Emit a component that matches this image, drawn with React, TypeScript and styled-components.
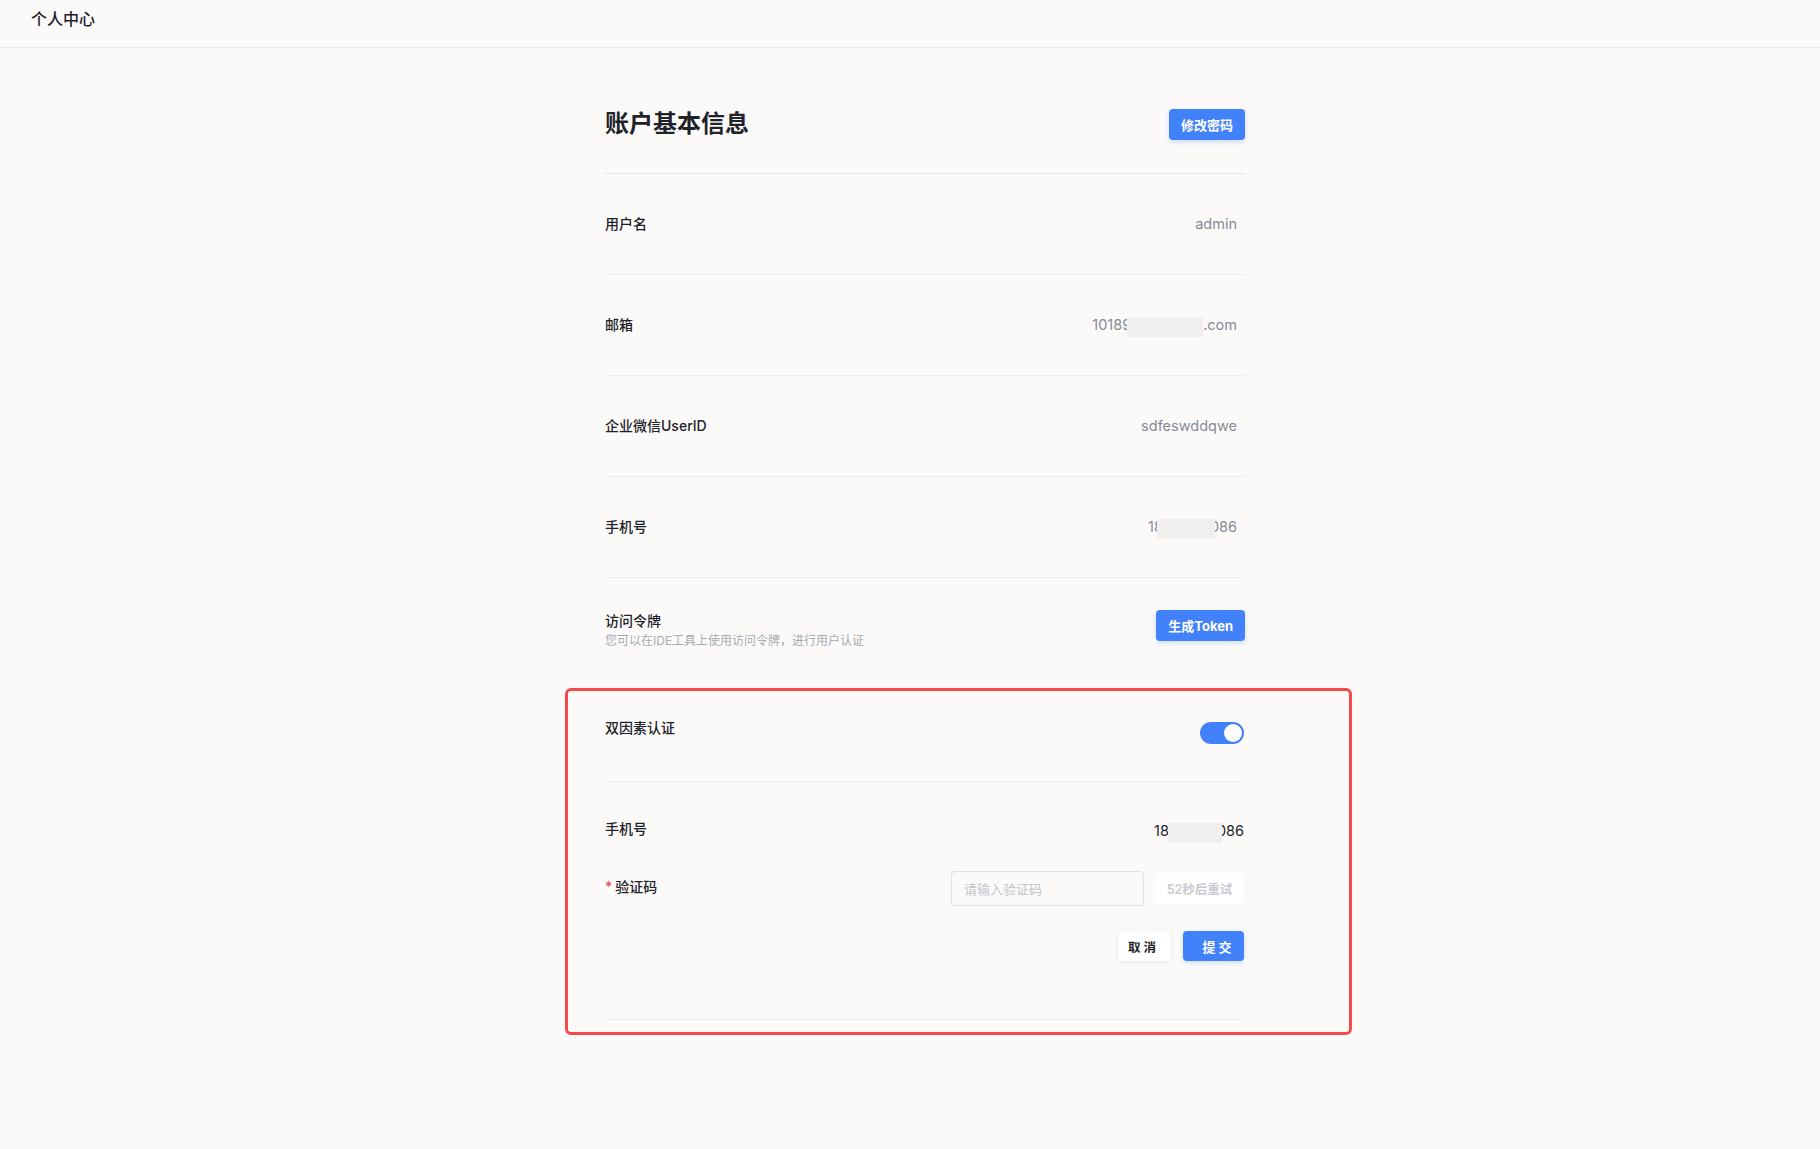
import React from "react";
import styled, { createGlobalStyle } from "styled-components";

const Global = createGlobalStyle`
  html, body { margin: 0; padding: 0; background: #fbfaf9; }
  body {
    font-family: Inter, "Noto Sans CJK SC", "Noto Sans", sans-serif;
    color: #1f2329;
    -webkit-font-smoothing: antialiased;
  }
  * { box-sizing: border-box; }
`;

const Page = styled.div`
  min-height: 1149px;
  background: #fbfaf9;
`;

const Header = styled.header`
  height: 48px;
  padding: 9px 31px 0;
  border-bottom: 1px solid #e6e6e6;
  font-size: 16px;
  line-height: 20px;
  font-weight: 500;
  color: #1f2329;
`;

const Main = styled.main`
  padding-left: 605px;
`;

const Content = styled.div`
  width: 640px;
`;

const TitleRow = styled.div`
  display: flex;
  align-items: center;
  justify-content: space-between;
  padding: 60px 0 33px;
  border-bottom: 1px solid #e6e6e6;
`;

const Title = styled.h1`
  margin: 0;
  font-size: 24px;
  line-height: 32px;
  font-weight: 600;
  color: #1f2329;
`;

const PrimaryButton = styled.button`
  height: 31px;
  padding: 0 12px;
  border: none;
  border-radius: 4px;
  background: #4182fb;
  color: #fff;
  font-family: inherit;
  font-size: 13px;
  font-weight: 700;
  box-shadow: 0 2px 5px rgba(65, 130, 251, 0.25);
`;

const InfoRow = styled.div`
  display: flex;
  align-items: center;
  justify-content: space-between;
  height: 101px;
  border-bottom: 1px solid #eeeeee;
  padding-right: 8px;
`;

const Label = styled.div`
  font-size: 14px;
  line-height: 20px;
  font-weight: 500;
  color: #1f2329;
`;

const FormLabel = styled(Label)`
  margin-top: 6px;
`;

const Value = styled.div<{ $dark?: boolean }>`
  display: flex;
  align-items: center;
  font-size: 14.5px;
  line-height: 20px;
  color: ${(p) => (p.$dark ? "#1f2329" : "#878b96")};
`;

const Redact = styled.span<{ $w: number; $l?: number; $r?: number }>`
  position: relative;
  z-index: 1;
  display: inline-block;
  width: ${(p) => p.$w}px;
  height: 20px;
  margin-left: ${(p) => p.$l ?? 0}px;
  margin-right: ${(p) => p.$r ?? 0}px;
  margin-top: 4px;
  background: #f0efee;
`;

const TokenRow = styled.div`
  display: flex;
  align-items: flex-start;
  justify-content: space-between;
  padding: 33px 0 39px;
`;

const TokenText = styled.div`
  display: flex;
  flex-direction: column;
  gap: 2px;
`;

const Hint = styled.div`
  font-size: 12px;
  line-height: 16px;
  color: #a8abb2;
`;

const TokenButton = styled(PrimaryButton)`
  margin-top: -1px;
`;

const Highlight = styled.section`
  margin: 0 -107px 0 -40px;
  padding: 0 105px 12px 37px;
  border: 3px solid #f24b4b;
  border-radius: 6px;
`;

const TwoFactorRow = styled.div`
  display: flex;
  align-items: flex-start;
  justify-content: space-between;
  padding: 27px 0 37px;
  border-bottom: 1px solid #eeeeee;
`;

const Switch = styled.div`
  width: 44px;
  height: 22px;
  margin-top: 4px;
  border-radius: 11px;
  background: #4182fb;
  display: flex;
  align-items: center;
  justify-content: flex-end;
  padding-right: 2px;
`;

const Knob = styled.div`
  width: 18px;
  height: 18px;
  border-radius: 50%;
  background: #fff;
`;

const Form = styled.div`
  display: flex;
  flex-direction: column;
  padding: 37px 0 58px;
  border-bottom: 1px solid #eeeeee;
`;

const FormRow = styled.div<{ $gap: number }>`
  display: flex;
  align-items: flex-start;
  justify-content: space-between;
  margin-bottom: ${(p) => p.$gap}px;
`;

const Required = styled.span`
  color: #f5484f;
  margin-right: 3px;
`;

const CodeGroup = styled.div`
  display: flex;
  align-items: center;
  gap: 11px;
`;

const Input = styled.input`
  width: 193px;
  height: 35px;
  border: 1px solid #dfe0e2;
  border-radius: 4px;
  background: transparent;
  padding: 0 12px;
  font-family: inherit;
  font-size: 13px;
  outline: none;
  &::placeholder { color: #c2c5cc; }
`;

const RetryButton = styled.button`
  width: 89px;
  height: 31px;
  border: none;
  border-radius: 4px;
  background: #ffffff;
  color: #c6c9d0;
  font-family: inherit;
  font-size: 12.5px;
  font-weight: 600;
`;

const Actions = styled.div`
  display: flex;
  justify-content: flex-end;
  gap: 12px;
`;

const GhostButton = styled.button`
  width: 53px;
  height: 30px;
  border: none;
  border-radius: 4px;
  background: #fff;
  color: #1f2329;
  font-family: inherit;
  font-size: 12.5px;
  font-weight: 700;
  letter-spacing: 3px;
  padding-left: 4px;
  box-shadow: 0 1px 4px rgba(0, 0, 0, 0.08);
`;

const SubmitButton = styled(PrimaryButton)`
  width: 61px;
  height: 30px;
  padding: 0 0 0 10px;
  letter-spacing: 3px;
`;

export default function App() {
  return (
    <Page>
      <Global />
      <Header>个人中心</Header>
      <Main>
        <Content>
          <TitleRow>
            <Title>账户基本信息</Title>
            <PrimaryButton>修改密码</PrimaryButton>
          </TitleRow>
          <InfoRow>
            <Label>用户名</Label>
            <Value>admin</Value>
          </InfoRow>
          <InfoRow>
            <Label>邮箱</Label>
            <Value>
              10189
              <Redact $w={76} $l={-4} />
              .com
            </Value>
          </InfoRow>
          <InfoRow>
            <Label>企业微信UserID</Label>
            <Value>sdfeswddqwe</Value>
          </InfoRow>
          <InfoRow>
            <Label>手机号</Label>
            <Value>
              18
              <Redact $w={58} $l={-6} $r={-5} />
              086
            </Value>
          </InfoRow>
          <TokenRow>
            <TokenText>
              <Label>访问令牌</Label>
              <Hint>您可以在IDE工具上使用访问令牌，进行用户认证</Hint>
            </TokenText>
            <TokenButton>生成Token</TokenButton>
          </TokenRow>
          <Highlight>
            <TwoFactorRow>
              <Label>双因素认证</Label>
              <Switch>
                <Knob />
              </Switch>
            </TwoFactorRow>
            <Form>
              <FormRow $gap={28}>
                <Label>手机号</Label>
                <Value $dark>
                  18
                  <Redact $w={54} $l={-1} $r={-5} />
                  086
                </Value>
              </FormRow>
              <FormRow $gap={25}>
                <FormLabel>
                  <Required>*</Required>验证码
                </FormLabel>
                <CodeGroup>
                  <Input placeholder="请输入验证码" />
                  <RetryButton>52秒后重试</RetryButton>
                </CodeGroup>
              </FormRow>
              <Actions>
                <GhostButton>取消</GhostButton>
                <SubmitButton>提交</SubmitButton>
              </Actions>
            </Form>
          </Highlight>
        </Content>
      </Main>
    </Page>
  );
}
